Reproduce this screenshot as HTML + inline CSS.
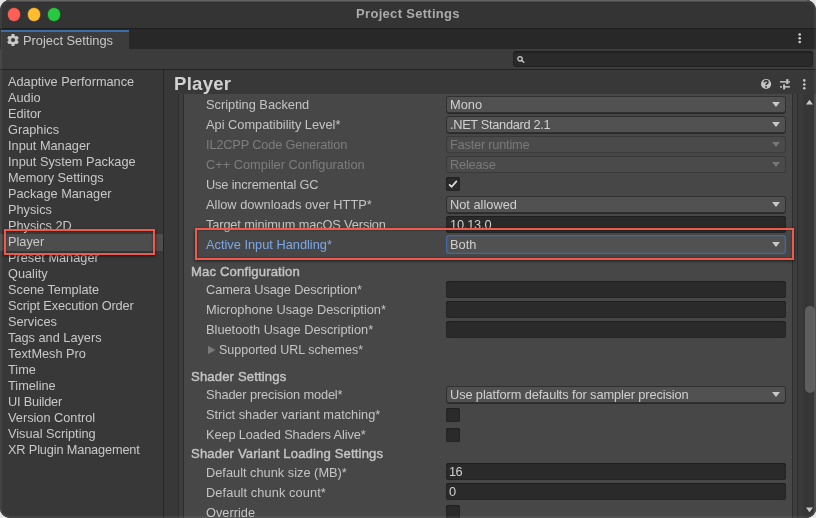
<!DOCTYPE html>
<html><head><meta charset="utf-8">
<style>
*{margin:0;padding:0;box-sizing:border-box}
html,body{width:816px;height:518px;overflow:hidden;background:#e6e6e6}
body{font-family:"Liberation Sans",sans-serif;font-size:12.8px;color:#c4c4c4;position:relative}
.a{position:absolute}
.t{will-change:transform}
#win{left:0;top:0;width:816px;height:518px;border-radius:10px;overflow:hidden;background:#2d2d2d}
#border{left:0;top:0;width:816px;height:518px;border-radius:10px;box-shadow:inset 0 0 0 2px rgba(255,255,255,0.06);pointer-events:none}
#title{left:0;top:0;width:816px;height:28px;background:#343434;box-shadow:inset 0 1.5px 0 #5a5a5a, inset 0 2.6px 0 #2c2c2c}
.tl{width:12.5px;height:12.5px;border-radius:50%;top:8.1px}
#ttext{left:0;width:816px;top:7px;line-height:14px;text-align:center;font-weight:bold;font-size:13px;letter-spacing:0.3px;color:#ababab}
#tabbar{left:0;top:28px;width:816px;height:21px;background:#282828;border-top:1px solid #1e1e1e}
#tab{left:1px;top:30px;width:127.8px;height:19px;background:#3c3c3c;border-top:2px solid #3b6ea5}
#toolbar{left:0;top:49px;width:816px;height:20px;background:#3c3c3c}
#search{left:513px;top:51px;width:300px;height:16px;background:#2a2a2a;border-radius:4px;box-shadow:inset 0 1.5px 0 #1d1d1d, inset 0 0 0 1px #212121}
#hsep{left:0;top:69px;width:816px;height:1px;background:#232323}
#side{left:0;top:70px;width:163px;height:448px;background:#383838}
#vsep{left:163px;top:70px;width:1px;height:448px;background:#242424}
#main{left:164px;top:70px;width:652px;height:448px;background:#383838}
.si{left:8px;height:16px;line-height:16px;font-size:12.75px;color:#c8c8c8;white-space:nowrap}
#sel{left:0;top:234.3px;width:163px;height:16.4px;background:#4d4d4d}
#ptitle{left:173.5px;top:72.8px;line-height:22px;font-size:18.6px;letter-spacing:0.25px;font-weight:bold;color:#d2d2d2}
#content{left:184px;top:94px;width:608px;height:424px;background:#474747}
.vl{top:94px;height:424px;width:1px;background:#2e2e2e}
.vm{top:94px;height:424px;background:#3e3e3e}
#scroll{left:803px;top:94px;width:11px;height:424px;background:#363636}
.lbl{left:206px;height:20px;line-height:20px;white-space:nowrap;color:#c4c4c4}
.dis{color:#7d7d7d}
.hdr{left:191px;font-size:13.1px;letter-spacing:0.15px;-webkit-text-stroke:0.42px #c4c4c4;height:20px;line-height:20px;color:#c4c4c4}
.dd{left:446px;width:340px;height:17px;background:#515151;border-radius:3px;box-shadow:inset 0 0 0 1px #303030, 0 1px 0 #2a2a2a;line-height:17px;padding-left:4px;color:#d0d0d0;white-space:nowrap}
.dd.dis{background:#4a4a4a;color:#7a7a7a;box-shadow:inset 0 0 0 1px #3a3a3a}
.tf{left:446px;width:340px;height:17px;background:#2a2a2a;border-radius:3px;box-shadow:inset 0 1px 0 #1f1f1f, inset 0 0 0 1px #242424;line-height:17px;padding-left:4px;color:#d0d0d0}
.arr{right:6.4px;top:5.8px;width:0;height:0;border-left:4px solid transparent;border-right:4px solid transparent;border-top:5.5px solid #c8c8c8}
.dis .arr{border-top-color:#777}
.cb{left:446px;width:14px;height:14px;background:#2a2a2a;border-radius:2.5px;box-shadow:inset 0 1px 0 #1f1f1f, inset 0 0 0 1px #242424}
.red{border:2.5px solid #f05a4a;box-shadow:0 1px 3px rgba(0,0,0,.65), inset 0 0 2px rgba(0,0,0,.5)}
</style></head><body>
<div id="win" class="a">
  <div id="title" class="a"></div>
  <div class="a tl" style="left:7.9px;background:#fe5f57;box-shadow:0 0 0 0.5px #9a3a35"></div>
  <div class="a tl" style="left:27.9px;background:#febc2e;box-shadow:0 0 0 0.5px #9a6f1f"></div>
  <div class="a tl" style="left:47.9px;background:#28c840;box-shadow:0 0 0 0.5px #1a7a28"></div>
  <div id="ttext" class="a t">Project Settings</div>
  <div id="tabbar" class="a"></div>
  <div id="tab" class="a"></div>
  <svg class="a" style="left:6.2px;top:33.3px" width="14" height="14" viewBox="-7 -7 14 14">
    <g fill="#c8c8c8">
      <circle r="4.6"/>
      <rect x="-1.6" y="-5.9" width="3.2" height="11.8" rx="0.7"/>
      <rect x="-1.6" y="-5.9" width="3.2" height="11.8" rx="0.7" transform="rotate(60)"/>
      <rect x="-1.6" y="-5.9" width="3.2" height="11.8" rx="0.7" transform="rotate(-60)"/>
    </g>
    <circle r="2.1" fill="#3c3c3c"/>
  </svg>
  <div class="a t" style="left:23px;top:33px;font-size:12.85px;color:#c8c8c8;line-height:16px;white-space:nowrap">Project Settings</div>
  <svg class="a" style="left:797px;top:32px" width="6" height="12">
    <circle cx="2.7" cy="2.5" r="1.3" fill="#d0d0d0"/><circle cx="2.7" cy="6.2" r="1.3" fill="#d0d0d0"/><circle cx="2.7" cy="10" r="1.3" fill="#d0d0d0"/>
  </svg>
  <div id="toolbar" class="a"></div>
  <div id="search" class="a"></div>
  <svg class="a" style="left:514px;top:53px" width="14" height="13">
    <circle cx="6" cy="5.8" r="2.2" fill="none" stroke="#c8c8c8" stroke-width="1.3"/>
    <line x1="7.6" y1="7.4" x2="9.8" y2="9.3" stroke="#c8c8c8" stroke-width="1.4" stroke-linecap="round"/>
  </svg>
  <div id="hsep" class="a"></div>
  <div id="side" class="a"></div>
  <div id="vsep" class="a"></div>
  <div id="main" class="a"></div>
  <div id="sel" class="a"></div>
  <div class="a si t" style="top:74px">Adaptive Performance</div>
  <div class="a si t" style="top:90px">Audio</div>
  <div class="a si t" style="top:106px">Editor</div>
  <div class="a si t" style="top:122px">Graphics</div>
  <div class="a si t" style="top:138px">Input Manager</div>
  <div class="a si t" style="top:154px">Input System Package</div>
  <div class="a si t" style="top:170px">Memory Settings</div>
  <div class="a si t" style="top:186px">Package Manager</div>
  <div class="a si t" style="top:202px">Physics</div>
  <div class="a si t" style="top:218px">Physics 2D</div>
  <div class="a si t" style="top:234px">Player</div>
  <div class="a si t" style="top:250px">Preset Manager</div>
  <div class="a si t" style="top:266px">Quality</div>
  <div class="a si t" style="top:282px">Scene Template</div>
  <div class="a si t" style="top:298px;letter-spacing:-0.12px">Script Execution Order</div>
  <div class="a si t" style="top:314px">Services</div>
  <div class="a si t" style="top:330px">Tags and Layers</div>
  <div class="a si t" style="top:346px">TextMesh Pro</div>
  <div class="a si t" style="top:362px">Time</div>
  <div class="a si t" style="top:378px">Timeline</div>
  <div class="a si t" style="top:394px;letter-spacing:-0.2px">UI Builder</div>
  <div class="a si t" style="top:410px">Version Control</div>
  <div class="a si t" style="top:426px">Visual Scripting</div>
  <div class="a si t" style="top:442px;letter-spacing:-0.15px">XR Plugin Management</div>

  <div id="ptitle" class="a t">Player</div>
  <!-- help icon -->
  <svg class="a" style="left:760px;top:77.7px" width="12" height="12" viewBox="0 0 12 12">
    <circle cx="6.1" cy="6" r="5.1" fill="#c4c4c4"/>
    <path d="M4.3 4.6 Q4.3 2.7 6.1 2.7 Q7.9 2.7 7.9 4.3 Q7.9 5.2 6.9 5.7 Q6.1 6.1 6.1 7.1" fill="none" stroke="#383838" stroke-width="1.7"/>
    <rect x="5.25" y="8.1" width="1.7" height="1.6" fill="#383838"/>
  </svg>
  <!-- sliders icon -->
  <svg class="a" style="left:779px;top:78px" width="13" height="13" viewBox="0 0 13 13">
    <g fill="#c4c4c4">
      <rect x="1" y="3.1" width="6.5" height="1.5"/><rect x="9.4" y="3.1" width="1.6" height="1.5"/>
      <rect x="7.2" y="1.1" width="2.2" height="5"/>
      <rect x="1" y="8.1" width="2" height="1.5"/><rect x="6" y="8.1" width="5" height="1.5"/>
      <rect x="4.1" y="6.4" width="2" height="5"/>
    </g>
  </svg>
  <svg class="a" style="left:801px;top:78px" width="6" height="13">
    <circle cx="3.3" cy="2.4" r="1.3" fill="#c8c8c8"/><circle cx="3.3" cy="6.5" r="1.3" fill="#c8c8c8"/><circle cx="3.3" cy="10.3" r="1.3" fill="#c8c8c8"/>
  </svg>

  <div class="a vl" style="left:178px"></div>
  <div class="a vm" style="left:179px;width:4px"></div>
  <div class="a vl" style="left:183px"></div>
  <div id="content" class="a"></div>
  <div class="a vl" style="left:792px"></div>
  <div class="a vm" style="left:793px;width:4px"></div>
  <div class="a vl" style="left:797px"></div>
  <div class="a" style="left:798px;top:94px;width:5px;height:424px;background:#3a3a3a"></div>
  <div id="scroll" class="a"></div>
  <div class="a" style="left:814px;top:94px;width:2px;height:424px;background:#454545"></div>
  <div class="a" style="left:804.8px;top:305.5px;width:9.8px;height:87px;border-radius:5px;background:#5e5e5e"></div>
  <svg class="a" style="left:805px;top:99px" width="9" height="7"><path d="M1 5.5 L4.5 0.8 L8 5.5Z" fill="#c8c8c8"/></svg>
  <svg class="a" style="left:805px;top:506px" width="9" height="7"><path d="M1 1.5 L4.5 6.2 L8 1.5Z" fill="#c8c8c8"/></svg>

  <div class="a lbl t" style="top:95px">Scripting Backend</div>
  <div class="a dd t" style="top:95.5px">Mono<div class="a arr"></div></div>
  <div class="a lbl t" style="top:115px">Api Compatibility Level*</div>
  <div class="a dd t" style="top:115.5px"><span style="letter-spacing:-0.32px">.NET Standard 2.1</span><div class="a arr"></div></div>
  <div class="a lbl dis t" style="top:135px;letter-spacing:-0.17px">IL2CPP Code Generation</div>
  <div class="a dd dis t" style="top:135.5px"><span style="letter-spacing:-0.22px">Faster runtime</span><div class="a arr"></div></div>
  <div class="a lbl dis t" style="top:155px">C++ Compiler Configuration</div>
  <div class="a dd dis t" style="top:155.5px"><span style="letter-spacing:-0.2px">Release</span><div class="a arr"></div></div>
  <div class="a lbl t" style="top:175px;letter-spacing:-0.16px">Use incremental GC</div>
  <div class="a cb" style="top:176.9px"></div>
  <svg class="a" style="left:446px;top:176.9px" width="14" height="14"><path d="M3.6 7.9 L5.7 9.8 L10.4 4.4" fill="none" stroke="#e0e0e0" stroke-width="1.7" stroke-linecap="round" stroke-linejoin="round"/></svg>
  <div class="a lbl t" style="top:195px">Allow downloads over HTTP*</div>
  <div class="a dd t" style="top:195.5px">Not allowed<div class="a arr"></div></div>
  <div class="a lbl t" style="top:215px;letter-spacing:-0.13px">Target minimum macOS Version</div>
  <div class="a tf t" style="top:215.5px"><span style="letter-spacing:-0.2px">10.13.0</span></div>
  <div class="a lbl t" style="top:235px;color:#7aa8e8">Active Input Handling*</div>
  <div class="a dd t" style="top:235px;height:18.5px;line-height:18.5px;box-shadow:inset 0 0 0 1.3px #3c6aa6"><span style="position:relative;top:1px">Both</span><div class="a arr" style="top:7px;right:5.8px"></div></div>

  <div class="a hdr t" style="top:261.8px">Mac Configuration</div>
  <div class="a lbl t" style="top:280.2px;letter-spacing:-0.11px">Camera Usage Description*</div>
  <div class="a tf" style="top:280.7px"></div>
  <div class="a lbl t" style="top:300px">Microphone Usage Description*</div>
  <div class="a tf" style="top:300.7px"></div>
  <div class="a lbl t" style="top:320px">Bluetooth Usage Description*</div>
  <div class="a tf" style="top:320.7px"></div>
  <svg class="a" style="left:207px;top:344.5px" width="10" height="10"><path d="M1 0.8 L8.5 5 L1 9.2Z" fill="#7a7a7a"/></svg>
  <div class="a lbl t" style="top:340px;left:219px;font-size:12.5px">Supported URL schemes*</div>

  <div class="a hdr t" style="top:366.7px">Shader Settings</div>
  <div class="a lbl t" style="top:385px;letter-spacing:-0.13px">Shader precision model*</div>
  <div class="a dd t" style="top:385.5px"><span style="letter-spacing:-0.11px">Use platform defaults for sampler precision</span><div class="a arr"></div></div>
  <div class="a lbl t" style="top:405px">Strict shader variant matching*</div>
  <div class="a cb" style="top:407.6px"></div>
  <div class="a lbl t" style="top:425px;letter-spacing:-0.13px">Keep Loaded Shaders Alive*</div>
  <div class="a cb" style="top:427.6px"></div>
  <div class="a hdr t" style="top:444px">Shader Variant Loading Settings</div>
  <div class="a lbl t" style="top:462.5px">Default chunk size (MB)*</div>
  <div class="a tf t" style="top:463px;padding-left:3px;letter-spacing:-0.5px">16</div>
  <div class="a lbl t" style="top:482.5px;letter-spacing:0.09px">Default chunk count*</div>
  <div class="a tf t" style="top:483px;padding-left:3px;letter-spacing:-0.3px">0</div>
  <div class="a lbl t" style="top:502.5px">Override</div>
  <div class="a cb" style="top:504.6px"></div>

  <div class="a red" style="left:4px;top:229px;width:151px;height:26px"></div>
  <div class="a red" style="left:195px;top:228px;width:599px;height:32px"></div>
  <div id="border" class="a"></div>
</div>
</body></html>
